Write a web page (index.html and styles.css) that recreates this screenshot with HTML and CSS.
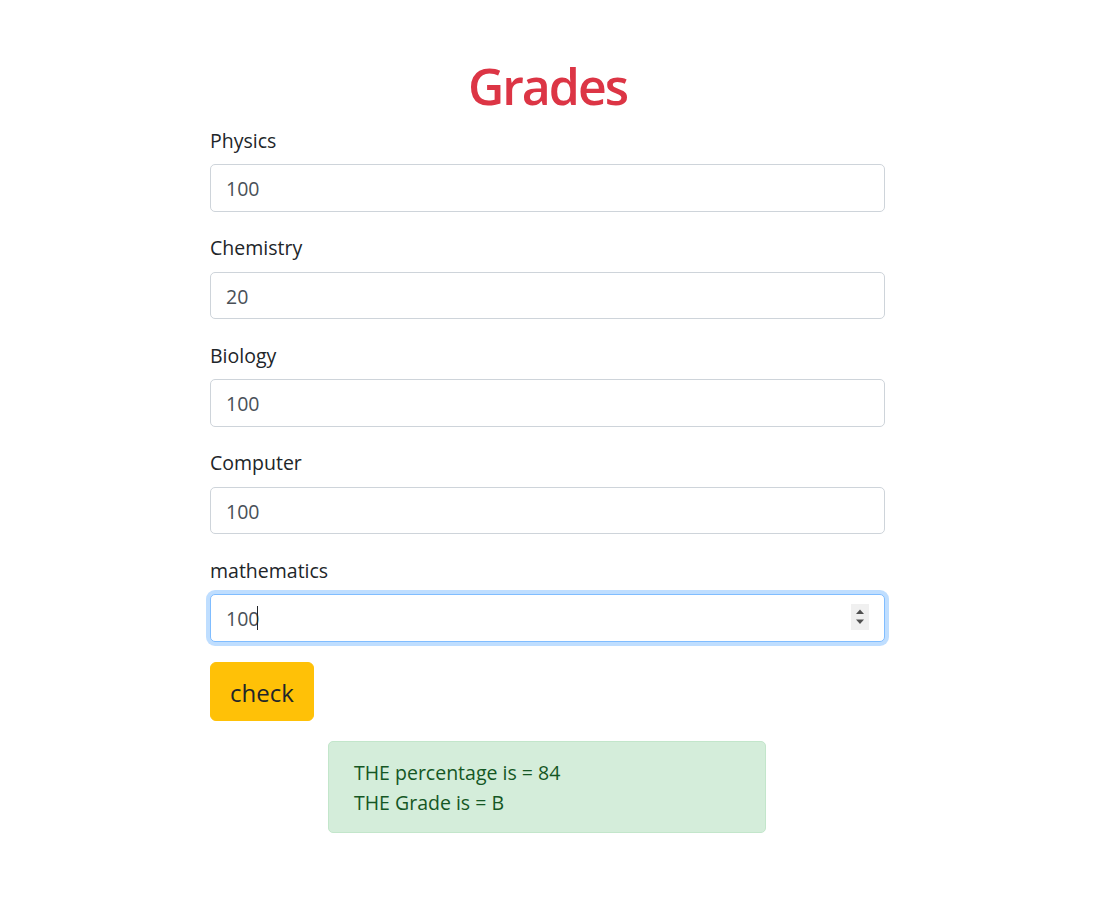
FILE: index.html
```html
<!DOCTYPE html>
<html lang="en">
<head>
<meta charset="utf-8">
<title>Grades</title>
<link rel="stylesheet" href="styles.css">
</head>
<body>
<main class="container">
  <h1 class="title">Grades</h1>
  <form class="grade-form">
    <div class="form-group">
      <label class="form-label" for="physics">Physics</label>
      <input class="form-control" id="physics" type="text" value="100">
    </div>
    <div class="form-group">
      <label class="form-label" for="chemistry">Chemistry</label>
      <input class="form-control" id="chemistry" type="text" value="20">
    </div>
    <div class="form-group">
      <label class="form-label" for="biology">Biology</label>
      <input class="form-control" id="biology" type="text" value="100">
    </div>
    <div class="form-group">
      <label class="form-label" for="computer">Computer</label>
      <input class="form-control" id="computer" type="text" value="100">
    </div>
    <div class="form-group">
      <label class="form-label" for="mathematics">mathematics</label>
      <div class="input-wrap">
        <input class="form-control is-focused" id="mathematics" type="text" value="100">
        <span class="caret"></span>
        <span class="spinner">
          <svg width="18" height="26" viewBox="0 0 18 26">
            <path d="M5 10 L9 5.5 L13 10 Z" fill="#505050"/>
            <path d="M5 15.5 L9 20 L13 15.5 Z" fill="#505050"/>
          </svg>
        </span>
      </div>
    </div>
    <button class="btn-check" type="button">check</button>
  </form>
  <div class="alert">
    <p class="alert-line">THE percentage is = 84</p>
    <p class="alert-line">THE Grade is = B</p>
  </div>
</main>
</body>
</html>
```

FILE: styles.css
```css
html, body {
  margin: 0;
  padding: 0;
  background: #fff;
}
body {
  font-family: "Segoe UI", "Open Sans", "Noto Sans", sans-serif;
  font-size: 19.5px;
  line-height: 30px;
  color: #212529;
}
.container {
  width: 675px;
  margin: 0 0 0 210px;
  padding-top: 54px;
}
.title {
  margin: 0 0 8px;
  padding-top: 2px;
  text-align: center;
  font-size: 50px;
  line-height: 60px;
  font-weight: 600;
  letter-spacing: -2px;
  color: #dc3545;
}
.grade-form {
  display: flex;
  flex-direction: column;
  align-items: flex-start;
}
.form-group {
  width: 100%;
  margin-bottom: 20px;
  display: flex;
  flex-direction: column;
}
.form-label {
  display: block;
  padding-top: 1.5px;
  margin-bottom: 8.5px;
  line-height: 30px;
}
.form-control {
  box-sizing: border-box;
  width: 100%;
  height: 47.5px;
  padding: 8.5px 15px 6.5px;
  font-family: inherit;
  font-size: 19.5px;
  line-height: 30px;
  color: #495057;
  background: #fff;
  border: 1px solid #ced4da;
  border-radius: 5px;
  outline: none;
}
.form-control.is-focused {
  border-color: #80bdff;
  box-shadow: 0 0 0 4px rgba(0, 123, 255, 0.25);
}
.input-wrap {
  position: relative;
}
.caret {
  position: absolute;
  left: 47px;
  top: 12px;
  width: 1px;
  height: 24px;
  background: #212529;
}
.spinner {
  position: absolute;
  right: 16px;
  top: 10px;
  width: 18px;
  height: 26px;
  background: #f0f0f0;
  display: block;
}
.spinner svg {
  display: block;
}
.btn-check {
  font-family: inherit;
  font-size: 24px;
  line-height: 37.5px;
  padding: 11px 19px 9px;
  color: #212529;
  background: #ffc107;
  border: 1px solid #ffc107;
  border-radius: 6px;
  cursor: pointer;
}
.alert {
  width: 438px;
  box-sizing: border-box;
  margin: 20px 0 0 118px;
  padding: 16px 25px 14px;
  background: #d4edda;
  border: 1px solid #c3e6cb;
  border-radius: 5px;
  color: #155724;
}
.alert-line {
  margin: 0;
  line-height: 30px;
}
```
